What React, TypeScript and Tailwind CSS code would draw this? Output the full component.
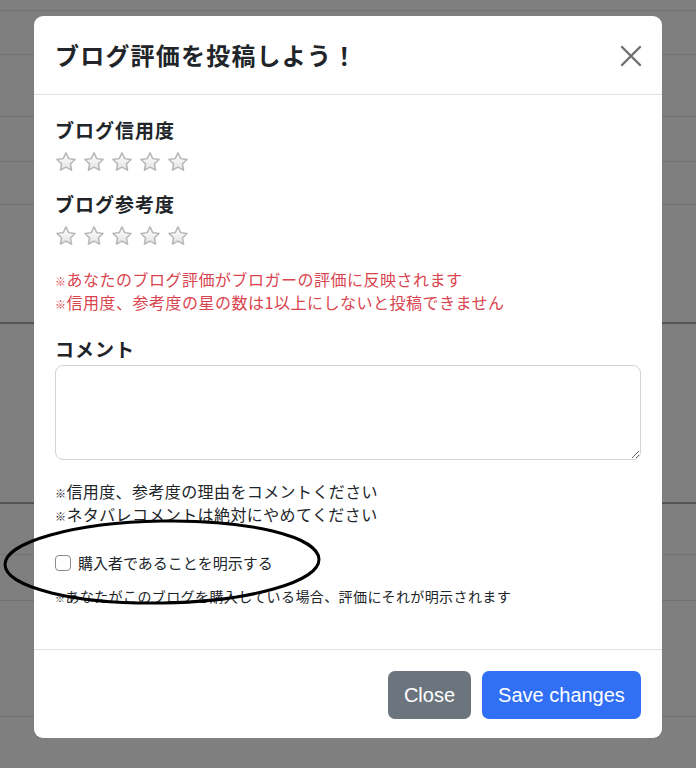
import React from 'react';

const jp = '"Noto Sans CJK JP", "Noto Sans", sans-serif';

const Star = () => (
  <svg width="22" height="22" viewBox="0 0 24 24">
    <defs>
      <linearGradient id="starFill" x1="0" y1="0" x2="0" y2="1">
        <stop offset="0%" stopColor="#ffffff" />
        <stop offset="100%" stopColor="#e2e2e2" />
      </linearGradient>
    </defs>
    <path
      d="M12 2l3 6.3 6.9.9-5 4.8 1.2 6.9L12 17.6l-6.1 3.3 1.2-6.9-5-4.8 6.9-.9z"
      fill="url(#starFill)"
      stroke="#b5b5b5"
      strokeWidth="1.6"
      strokeLinejoin="round"
    />
  </svg>
);

const Stars = () => (
  <div className="flex gap-[6px]">
    <Star />
    <Star />
    <Star />
    <Star />
    <Star />
  </div>
);

const Mark = () => <span className="text-[11px] leading-none">※</span>;

export default function App() {
  return (
    <div className="relative w-[696px] h-[768px] overflow-hidden bg-[#7f7f7f]" style={{ fontFamily: jp }}>
      {/* page behind the backdrop */}
      <div className="flex flex-col">
        <div className="h-[11px] border-b border-[#727272]" />
        <div className="h-[44px] border-b border-[#727272]" />
        <div className="h-[62px] border-b border-[#727272]" />
        <div className="h-[45px] border-b border-[#727272]" />
        <div className="h-[43px] border-b border-[#727272]" />
        <div className="h-[119px] border-b-2 border-[#545454]" />
        <div className="h-[180px] border-b-2 border-[#545454]" />
        <div className="h-[51px] border-b border-[#727272]" />
        <div className="h-[46px] border-b border-[#727272]" />
        <div className="h-[116px] border-b border-[#727272]" />
      </div>

      {/* modal */}
      <div className="absolute inset-0 flex justify-center pt-[16px]">
        <div className="w-[628px] h-[722px] bg-white rounded-[9px] flex flex-col text-[#212529]">
          {/* header */}
          <div className="h-[79px] shrink-0 border-b border-[#dee2e6] pl-[21px] pr-[20px] flex items-center justify-between">
            <h1 className="text-[24px] font-bold leading-[32px] tracking-[1.2px]">ブログ評価を投稿しよう！</h1>
            <svg width="22" height="22" viewBox="0 0 22 22" className="mt-[1px]">
              <path d="M2 2L20 20M20 2L2 20" stroke="#6e6e6e" strokeWidth="2.4" strokeLinecap="round" />
            </svg>
          </div>

          {/* body */}
          <div className="flex-1 px-[21px] pt-[21px] flex flex-col">
            <h2 className="text-[19px] font-bold leading-[28px] tracking-[1px]">ブログ信用度</h2>
            <div className="mt-[7px]">
              <Stars />
            </div>
            <h2 className="mt-[17px] text-[19px] font-bold leading-[28px] tracking-[1px]">ブログ参考度</h2>
            <div className="mt-[7px]">
              <Stars />
            </div>
            <div className="mt-[21px] text-[16px] leading-[23px] tracking-[0.5px] text-[#d9444e]">
              <p>
                <Mark />あなたのブログ評価がブロガーの評価に反映されます
              </p>
              <p>
                <Mark />信用度、参考度の星の数は1以上にしないと投稿できません
              </p>
            </div>
            <h2 className="mt-[21px] text-[19px] font-bold leading-[28px] tracking-[1px]">コメント</h2>
            <textarea className="mt-[2px] h-[95px] w-full resize-y rounded-[8px] border border-[#ced4da] outline-none" />
            <div className="mt-[20px] text-[16px] leading-[23px] tracking-[0.4px]">
              <p>
                <Mark />信用度、参考度の理由をコメントください
              </p>
              <p>
                <Mark />ネタバレコメントは絶対にやめてください
              </p>
            </div>
            <label className="mt-[26px] flex items-center gap-[7px] text-[15px] leading-[22px]">
              <span className="w-[16px] h-[16px] rounded-[4px] border border-[#8a8a8a] bg-white" />
              購入者であることを明示する
            </label>
            <p className="mt-[12px] text-[14px] leading-[20px] tracking-[0.4px]">
              <span className="text-[10px] leading-none">※</span>あなたがこのブログを購入している場合、評価にそれが明示されます
            </p>
          </div>

          {/* footer */}
          <div className="h-[89px] shrink-0 border-t border-[#dee2e6] pr-[21px] flex items-center justify-end gap-[11px] pt-[1px]" style={{ fontFamily: '"Liberation Sans", Arial, sans-serif' }}>
            <button className="h-[48px] w-[83px] rounded-[7px] bg-[#6c757d] text-white text-[20px]">Close</button>
            <button className="h-[48px] w-[159px] rounded-[7px] bg-[#316ff5] text-white text-[20px]">Save changes</button>
          </div>
        </div>
      </div>

      {/* hand-drawn annotation */}
      <svg className="absolute left-0 top-0 pointer-events-none" width="696" height="768">
        <ellipse cx="162" cy="562" rx="157" ry="41" fill="none" stroke="#000" strokeWidth="3" transform="rotate(-1 162 562)" />
      </svg>
    </div>
  );
}
